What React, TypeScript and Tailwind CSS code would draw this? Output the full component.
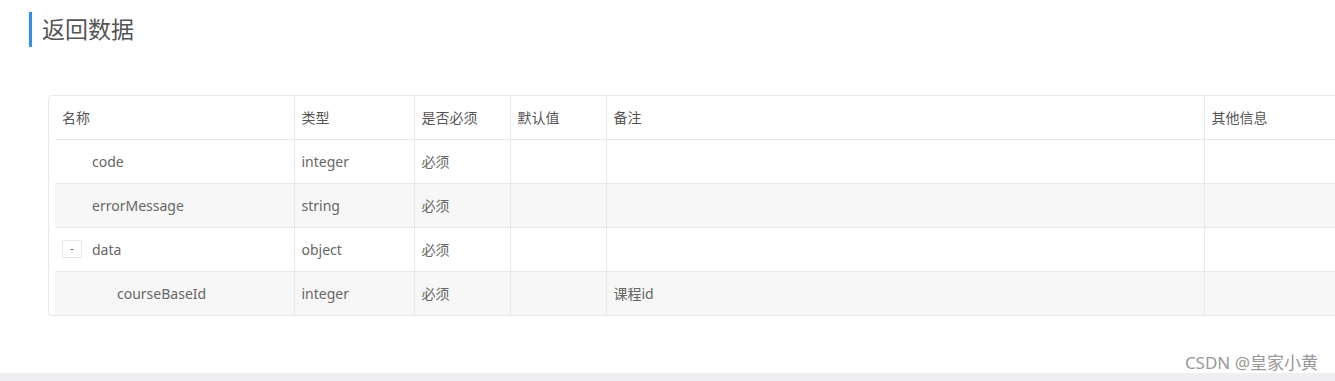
const font = { fontFamily: '"Noto Sans", "Noto Sans CJK SC", sans-serif' };

type Row = {
  name: string;
  type: string;
  required: string;
  def: string;
  remark: string;
  other: string;
  level: number;
  toggle?: boolean;
};

const rows: Row[] = [
  { name: 'code', type: 'integer', required: '必须', def: '', remark: '', other: '', level: 0 },
  { name: 'errorMessage', type: 'string', required: '必须', def: '', remark: '', other: '', level: 0 },
  { name: 'data', type: 'object', required: '必须', def: '', remark: '', other: '', level: 0, toggle: true },
  { name: 'courseBaseId', type: 'integer', required: '必须', def: '', remark: '课程id', other: '', level: 1 },
];

const cols = ['w-[239px]', 'w-[120px]', 'w-[96px]', 'w-[96px]', 'w-[598px]', 'w-[150px]'];
const heads = ['名称', '类型', '是否必须', '默认值', '备注', '其他信息'];

export default function App() {
  return (
    <div className="w-[1335px] h-[381px] overflow-hidden bg-white flex flex-col text-[#666]" style={font}>
      <div className="flex-1">
        {/* Title */}
        <div className="pt-3 pl-[29px]">
          <div className="border-l-[3px] border-[#2f8ff0] h-[35px] flex items-center pl-[10px]">
            <h2 className="text-[23px] text-[#555] leading-none">返回数据</h2>
          </div>
        </div>

        {/* Table card */}
        <div className="mt-[48px] ml-[48px] w-[1320px] border border-[#e8e8e8] rounded-[4px] pl-[6px]">
          <table className="border-collapse table-fixed text-[14px]">
            <colgroup>
              {cols.map((c, i) => (
                <col key={i} className={c} />
              ))}
            </colgroup>
            <thead>
              <tr className="h-[43px] border-b border-[#e8e8e8]">
                {heads.map((h, i) => (
                  <th
                    key={h}
                    className={`text-left font-normal px-[7px] text-[#555] ${i > 0 ? 'border-l border-[#e8e8e8]' : 'pl-[7px]'}`}
                  >
                    {h}
                  </th>
                ))}
              </tr>
            </thead>
            <tbody>
              {rows.map((r, idx) => (
                <tr
                  key={r.name}
                  className={`h-[44px] ${idx < rows.length - 1 ? 'border-b border-[#e8e8e8]' : ''} ${idx % 2 === 1 ? 'bg-[#f7f7f7]' : 'bg-white'}`}
                >
                  <td className="px-[7px]">
                    <div className="flex items-center">
                      {r.toggle ? (
                        <span className="w-[20px] h-[18px] border border-[#e8e8e8] bg-white flex items-center justify-center text-[12px] leading-none mr-[10px] text-[#666]">
                          -
                        </span>
                      ) : (
                        <span className="w-[30px] shrink-0" />
                      )}
                      {r.level > 0 && <span className="w-[25px] shrink-0" />}
                      <span>{r.name}</span>
                    </div>
                  </td>
                  <td className="px-[7px] border-l border-[#e8e8e8]">{r.type}</td>
                  <td className="px-[7px] border-l border-[#e8e8e8]">{r.required}</td>
                  <td className="px-[7px] border-l border-[#e8e8e8]">{r.def}</td>
                  <td className="px-[7px] border-l border-[#e8e8e8]">{r.remark}</td>
                  <td className="px-[7px] border-l border-[#e8e8e8]">{r.other}</td>
                </tr>
              ))}
            </tbody>
          </table>
        </div>
      </div>

      {/* Footer watermark + bar */}
      <div className="flex justify-end pr-[17px]">
        <span className="text-[17px] text-[#999] leading-[20px]">CSDN @皇家小黄</span>
      </div>
      <div className="h-[8px] bg-[#efeff2]" />
    </div>
  );
}
